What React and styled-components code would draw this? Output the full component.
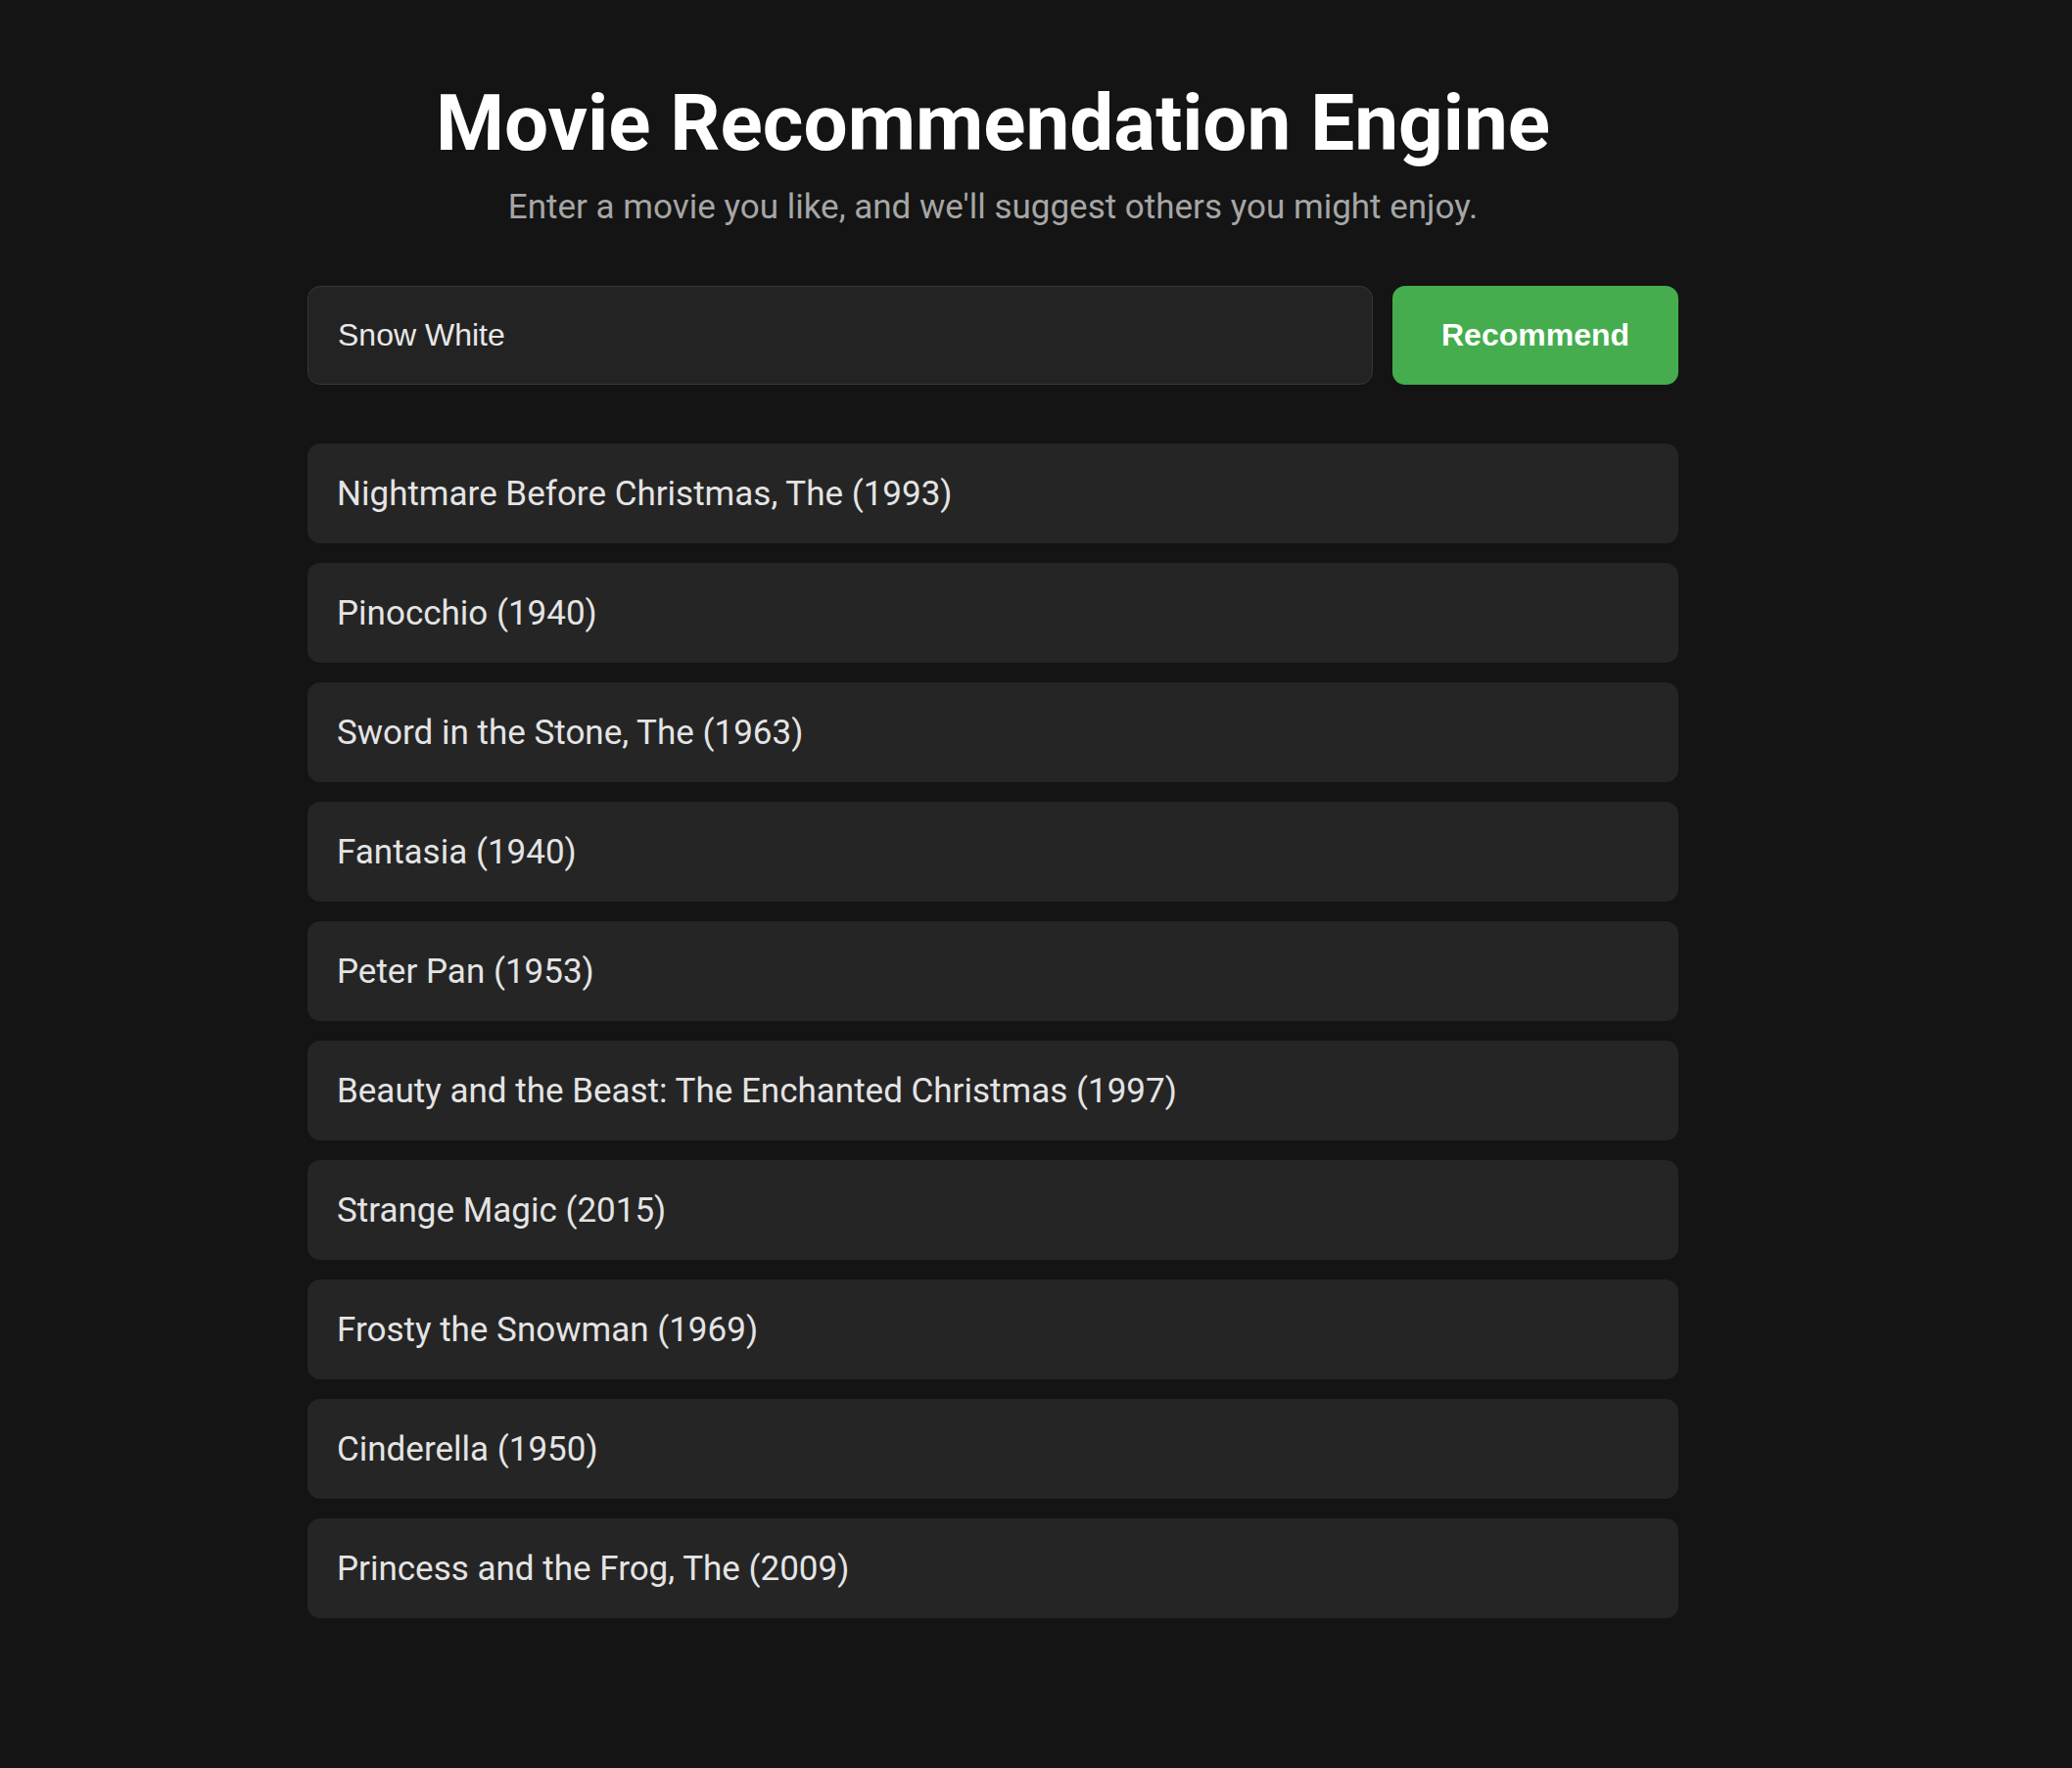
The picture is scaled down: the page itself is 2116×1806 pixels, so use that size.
import React, { useState } from "react";
import styled, { createGlobalStyle } from "styled-components";

const GlobalStyle = createGlobalStyle`
  html, body {
    margin: 0;
    padding: 0;
    background: #141414;
  }
  body {
    font-family: Roboto, "Liberation Sans", Arial, sans-serif;
    color: #e6e6e6;
  }
`;

const Page = styled.div`
  min-height: 100vh;
  padding: 79px 88px 80px 0;
  box-sizing: border-box;
`;

const Container = styled.main`
  max-width: 1400px;
  margin: 0 auto;
`;

const Header = styled.header`
  text-align: center;
`;

const Title = styled.h1`
  margin: 0;
  font-size: 80px;
  font-weight: 700;
  color: #ffffff;
  line-height: normal;
`;

const Subtitle = styled.p`
  margin: 18px 0 0;
  font-size: 35px;
  color: #a6a6a6;
  line-height: normal;
`;

const SearchRow = styled.form`
  display: flex;
  gap: 20px;
  margin-top: 60px;
`;

const Input = styled.input`
  flex: 1;
  height: 101px;
  box-sizing: border-box;
  padding: 0 30px;
  background: #232323;
  border: 1px solid #363636;
  border-radius: 13px;
  color: #e8e8e8;
  font-family: "Liberation Sans", Arial, sans-serif;
  font-size: 32px;
  outline: none;
`;

const Button = styled.button`
  width: 292px;
  height: 101px;
  border: none;
  border-radius: 13px;
  background: #45ad4e;
  color: #ffffff;
  font-family: "Liberation Sans", Arial, sans-serif;
  font-weight: 700;
  font-size: 32px;
  cursor: pointer;

  &:hover {
    background: #3f9f48;
  }
`;

const List = styled.ul`
  list-style: none;
  margin: 60px 0 0;
  padding: 0;
  display: flex;
  flex-direction: column;
  gap: 20px;
`;

const Item = styled.li`
  height: 102px;
  display: flex;
  align-items: center;
  padding: 0 30px;
  background: #252525;
  border-radius: 13px;
  font-size: 35px;
  color: #e4e4e4;
`;

const movies = [
  "Nightmare Before Christmas, The (1993)",
  "Pinocchio (1940)",
  "Sword in the Stone, The (1963)",
  "Fantasia (1940)",
  "Peter Pan (1953)",
  "Beauty and the Beast: The Enchanted Christmas (1997)",
  "Strange Magic (2015)",
  "Frosty the Snowman (1969)",
  "Cinderella (1950)",
  "Princess and the Frog, The (2009)",
];

export default function App() {
  const [query, setQuery] = useState("Snow White");

  return (
    <Page>
      <GlobalStyle />
      <Container>
        <Header>
          <Title>Movie Recommendation Engine</Title>
          <Subtitle>Enter a movie you like, and we'll suggest others you might enjoy.</Subtitle>
        </Header>
        <SearchRow onSubmit={(e) => e.preventDefault()}>
          <Input value={query} onChange={(e) => setQuery(e.target.value)} />
          <Button type="submit">Recommend</Button>
        </SearchRow>
        <List>
          {movies.map((m) => (
            <Item key={m}>{m}</Item>
          ))}
        </List>
      </Container>
    </Page>
  );
}
